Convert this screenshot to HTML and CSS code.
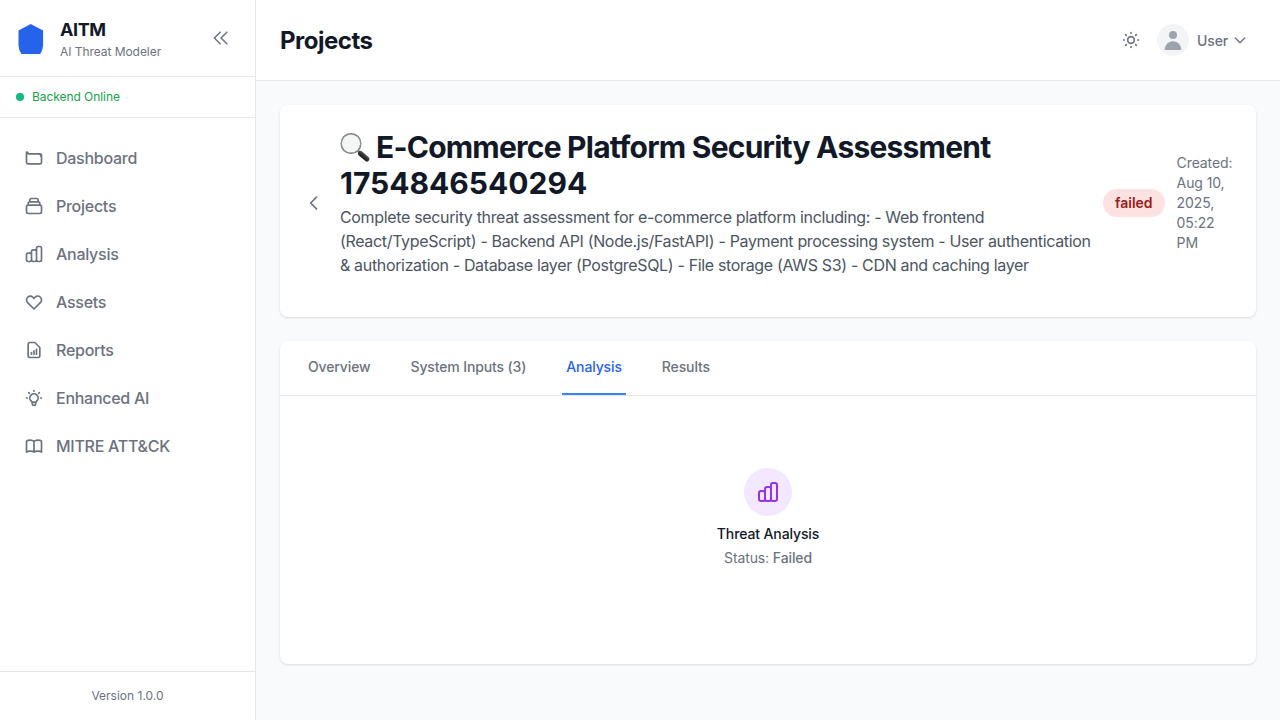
FILE: index.html
```html
<!DOCTYPE html>
<html lang="en">
<head>
<meta charset="utf-8">
<title>AITM - Projects</title>
<link rel="stylesheet" href="styles.css">
</head>
<body>
<div class="app">
  <aside class="sidebar">
    <div class="brand">
      <svg class="brand-logo" viewBox="0 0 32 32"><path d="M15.700 2 28.100 8.600V23q-.2 5.500-2.900 9H6.400q-2.700-3.500-2.900-9V8.600z" fill="#2563eb"/></svg>
      <div class="brand-text">
        <div class="brand-name">AITM</div>
        <div class="brand-sub">AI Threat Modeler</div>
      </div>
      <button class="collapse" aria-label="Collapse"><svg class="icon" viewBox="0 0 24 24"><path d="M11 19l-7-7 7-7m8 14l-7-7 7-7"/></svg></button>
    </div>
    <div class="status"><span class="dot"></span><span>Backend Online</span></div>
    <nav class="nav">
      <a class="nav-item"><svg class="icon" viewBox="0 0 24 24"><path d="M3 7v10a2 2 0 002 2h14a2 2 0 002-2V9a2 2 0 00-2-2H5a2 2 0 00-2-2z"/><path d="M18 7.500h2v2"/></svg>Dashboard</a>
      <a class="nav-item"><svg class="icon" viewBox="0 0 24 24"><path d="M19 11H5m14 0a2 2 0 012 2v6a2 2 0 01-2 2H5a2 2 0 01-2-2v-6a2 2 0 012-2m14 0V9a2 2 0 00-2-2M5 11V9a2 2 0 012-2m0 0V5a2 2 0 012-2h6a2 2 0 012 2v2M7 7h10"/></svg>Projects</a>
      <a class="nav-item"><svg class="icon" viewBox="0 0 24 24"><path d="M9 19v-6a2 2 0 00-2-2H5a2 2 0 00-2 2v6a2 2 0 002 2h2a2 2 0 002-2zm0 0V9a2 2 0 012-2h2a2 2 0 012 2v10m-6 0a2 2 0 002 2h2a2 2 0 002-2m0 0V5a2 2 0 012-2h2a2 2 0 012 2v14a2 2 0 01-2 2h-2a2 2 0 01-2-2z"/></svg>Analysis</a>
      <a class="nav-item"><svg class="icon" viewBox="0 0 24 24"><path d="M4.318 6.318a4.500 4.500 0 000 6.364L12 20.364l7.682-7.682a4.500 4.500 0 00-6.364-6.364L12 7.636l-1.318-1.318a4.500 4.500 0 00-6.364 0z"/></svg>Assets</a>
      <a class="nav-item"><svg class="icon" viewBox="0 0 24 24"><path d="M9 17v-2m3 2v-4m3 4v-6m2 10H7a2 2 0 01-2-2V5a2 2 0 012-2h5.586a1 1 0 01.707.293l5.414 5.414a1 1 0 01.293.707V19a2 2 0 01-2 2z"/></svg>Reports</a>
      <a class="nav-item"><svg class="icon" viewBox="0 0 24 24"><path d="M9.663 17h4.673M12 3v1m6.364 1.636l-.707.707M21 12h-1M4 12H3m3.343-5.657l-.707-.707m2.828 9.900a5 5 0 117.072 0l-.548.547A3.374 3.374 0 0014 18.469V19a2 2 0 11-4 0v-.531c0-.895-.356-1.754-.988-2.386l-.548-.547z"/></svg>Enhanced AI</a>
      <a class="nav-item"><svg class="icon" viewBox="0 0 24 24"><path d="M12 6.500v13M12 6.500C11 5.300 9.500 5 7.500 5S4 5.300 3 6.253v13C4 18.400 5.500 18.200 7.500 18.200s3.500.1 4.500 1.053M12 6.500C13 5.300 14.500 5 16.500 5s3.500.3 4.500 1.253v13c-1-.853-2.500-1.053-4.500-1.053s-3.500.1-4.500 1.053"/></svg>MITRE ATT&amp;CK</a>
    </nav>
    <div class="version">Version 1.0.0</div>
  </aside>
  <div class="content">
    <header class="topbar">
      <h1 class="page-title">Projects</h1>
      <div class="actions">
        <svg class="icon" viewBox="0 0 24 24"><path d="M12 3v1m0 16v1m9-9h-1M4 12H3m15.364 6.364l-.707-.707M6.343 6.343l-.707-.707m12.728 0l-.707.707M6.343 17.657l-.707.707M16 12a4 4 0 11-8 0 4 4 0 018 0z"/></svg>
        <div class="user">
          <svg class="avatar" viewBox="0 0 32 32"><circle cx="16" cy="16" r="16" fill="#f3f4f6"/><circle cx="16" cy="11" r="4" fill="#9ca3af"/><path d="M7.700 26c.2-5 3.500-8.700 8.300-8.700s8.100 3.700 8.300 8.700z" fill="#9ca3af"/></svg>
          <span class="user-name">User</span>
          <svg class="icon chevron" viewBox="0 0 24 24"><path d="M19 9l-7 7-7-7"/></svg>
        </div>
      </div>
    </header>
    <main class="main">
      <section class="card project">
        <svg class="icon back" viewBox="0 0 24 24"><path d="M15 19l-7-7 7-7"/></svg>
        <div class="project-text">
          <h2 class="project-title"><svg class="magnifier" viewBox="0 0 32 32"><defs><linearGradient id="handle" x1="0" y1="1" x2="1" y2="0"><stop offset="0" stop-color="#111"/><stop offset=".55" stop-color="#333"/><stop offset="1" stop-color="#888"/></linearGradient></defs><path d="M18 19l3 3" stroke="#777" stroke-width="2.500"/><path d="M20.500 21.500l6.500 5.500" stroke="url(#handle)" stroke-width="5" stroke-linecap="round"/><circle cx="11" cy="11.500" r="9.800" fill="#f4f5f5" stroke="#5f666b" stroke-width="1.400"/><circle cx="11" cy="11.500" r="9.600" fill="none" stroke="#c5ced3" stroke-width=".5"/></svg>E-Commerce Platform Security Assessment <span class="project-id">1754846540294</span></h2>
          <p class="project-desc">Complete security threat assessment for e-commerce platform including: - Web frontend (React/TypeScript) - Backend API (Node.js/FastAPI) - Payment processing system - User authentication &amp; authorization - Database layer (PostgreSQL) - File storage (AWS S3) - CDN and caching layer</p>
        </div>
        <span class="badge">failed</span>
        <div class="created">Created: Aug 10, 2025, 05:22 PM</div>
      </section>
      <section class="card panel">
        <div class="tabs">
          <a class="tab">Overview</a>
          <a class="tab">System Inputs (3)</a>
          <a class="tab active">Analysis</a>
          <a class="tab">Results</a>
        </div>
        <div class="empty">
          <div class="empty-icon"><svg class="icon" viewBox="0 0 24 24"><path d="M9 19v-6a2 2 0 00-2-2H5a2 2 0 00-2 2v6a2 2 0 002 2h2a2 2 0 002-2zm0 0V9a2 2 0 012-2h2a2 2 0 012 2v10m-6 0a2 2 0 002 2h2a2 2 0 002-2m0 0V5a2 2 0 012-2h2a2 2 0 012 2v14a2 2 0 01-2 2h-2a2 2 0 01-2-2z"/></svg></div>
          <h3 class="empty-title">Threat Analysis</h3>
          <p class="empty-status">Status: <span class="strong">Failed</span></p>
        </div>
      </section>
    </main>
  </div>
</div>
</body>
</html>
```
FILE: styles.css
```css
* { box-sizing: border-box; margin: 0; padding: 0; }
body { font-family: Inter, "Liberation Sans", sans-serif; color: #111827; font-size: 16px; line-height: 24px; }
.app { display: flex; height: 720px; overflow: hidden; background: #f9fafb; }
.icon { width: 20px; height: 20px; flex: none; display: block; fill: none; stroke: currentColor; stroke-width: 2; stroke-linecap: round; stroke-linejoin: round; }
.sidebar { width: 256px; flex: none; display: flex; flex-direction: column; background: #fff; border-right: 1px solid #e5e7eb; }
.brand { height: 77px; display: flex; align-items: center; padding: 0 24px 0 15px; border-bottom: 1px solid #e5e7eb; }
.brand-logo { width: 32px; height: 32px; margin-right: 13px; flex: none; }
.brand-text { flex: 1; }
.brand-name { font-size: 18px; line-height: 28px; font-weight: 700; letter-spacing: -.4px; }
.brand-sub { font-size: 12px; line-height: 16px; color: #6b7280; letter-spacing: -.05px; }
.collapse { border: 0; background: none; color: #6b7280; }
.collapse .icon { stroke-width: 1.8; }
.status { height: 41px; display: flex; align-items: center; gap: 8px; padding: 0 16px; font-size: 12px; color: #16a34a; letter-spacing: -.06px; border-bottom: 1px solid #e5e7eb; }
.dot { width: 8px; height: 8px; border-radius: 50%; background: #10b981; }
.nav { flex: 1; display: flex; flex-direction: column; gap: 8px; padding: 20px 12px; }
.nav-item { height: 40px; display: flex; align-items: center; gap: 12px; padding: 0 12px; font-weight: 500; color: #6b7280; letter-spacing: -.27px; }
.version { height: 49px; display: flex; align-items: center; justify-content: center; font-size: 12px; color: #6b7280; border-top: 1px solid #e5e7eb; }
.content { flex: 1; min-width: 0; display: flex; flex-direction: column; }
.topbar { height: 81px; display: flex; align-items: center; justify-content: space-between; padding: 0 32px 0 24px; background: #fff; border-bottom: 1px solid #e5e7eb; }
.page-title { padding-top: 2px; font-size: 24px; line-height: 32px; font-weight: 700; letter-spacing: -.5px; }
.actions { display: flex; align-items: center; gap: 16px; color: #6b7280; }
.user { display: flex; align-items: center; gap: 8px; font-size: 14px; font-weight: 500; letter-spacing: -.15px; }
.user-name { padding-top: 2px; }
.avatar { width: 32px; height: 32px; }
.chevron { width: 16px; height: 16px; margin-left: -4px; }
.main { display: flex; flex-direction: column; gap: 24px; padding: 24px; }
.card { background: #fff; border-radius: 8px; box-shadow: 0 1px 3px rgba(0,0,0,.1), 0 1px 2px -1px rgba(0,0,0,.1); }
.project { height: 212px; display: flex; align-items: center; padding: 8px 20px 24px 24px; }
.back { color: #6b7280; margin-right: 16px; }
.project-text { width: 751px; flex: none; margin-right: 12px; }
.project-title { font-size: 30px; line-height: 36px; font-weight: 700; letter-spacing: -.77px; }
.project-id { letter-spacing: 0; }
.magnifier { display: inline-block; width: 32px; height: 32px; margin-right: 4px; vertical-align: -6px; }
.project-desc { margin-top: 4px; color: #4b5563; letter-spacing: -.34px; }
.badge { flex: none; padding: 4px 12px; border-radius: 14px; background: #fee2e2; color: #991b1b; font-size: 14px; line-height: 20px; font-weight: 600; }
.created { width: 57px; flex: none; margin-left: 12px; font-size: 14px; line-height: 20px; color: #6b7280; letter-spacing: -.1px; }
.panel { height: 323px; }
.tabs { height: 55px; display: flex; gap: 32px; padding: 0 24px; border-bottom: 1px solid #e5e7eb; }
.tab { padding: 16px 4px; font-size: 14px; line-height: 20px; font-weight: 500; color: #6b7280; letter-spacing: -.13px; border-bottom: 2px solid transparent; }
.tab.active { color: #2563eb; border-color: #3b82f6; }
.empty { display: flex; flex-direction: column; align-items: center; padding-top: 72px; font-size: 14px; line-height: 20px; letter-spacing: -.12px; }
.empty-icon { width: 48px; height: 48px; display: flex; align-items: center; justify-content: center; border-radius: 50%; background: #f3e8ff; color: #9333ea; }
.empty-icon .icon { width: 24px; height: 24px; }
.empty-title { margin-top: 8px; font-size: 14px; font-weight: 500; }
.empty-status { margin-top: 4px; color: #6b7280; }
.strong { font-weight: 500; }
```
